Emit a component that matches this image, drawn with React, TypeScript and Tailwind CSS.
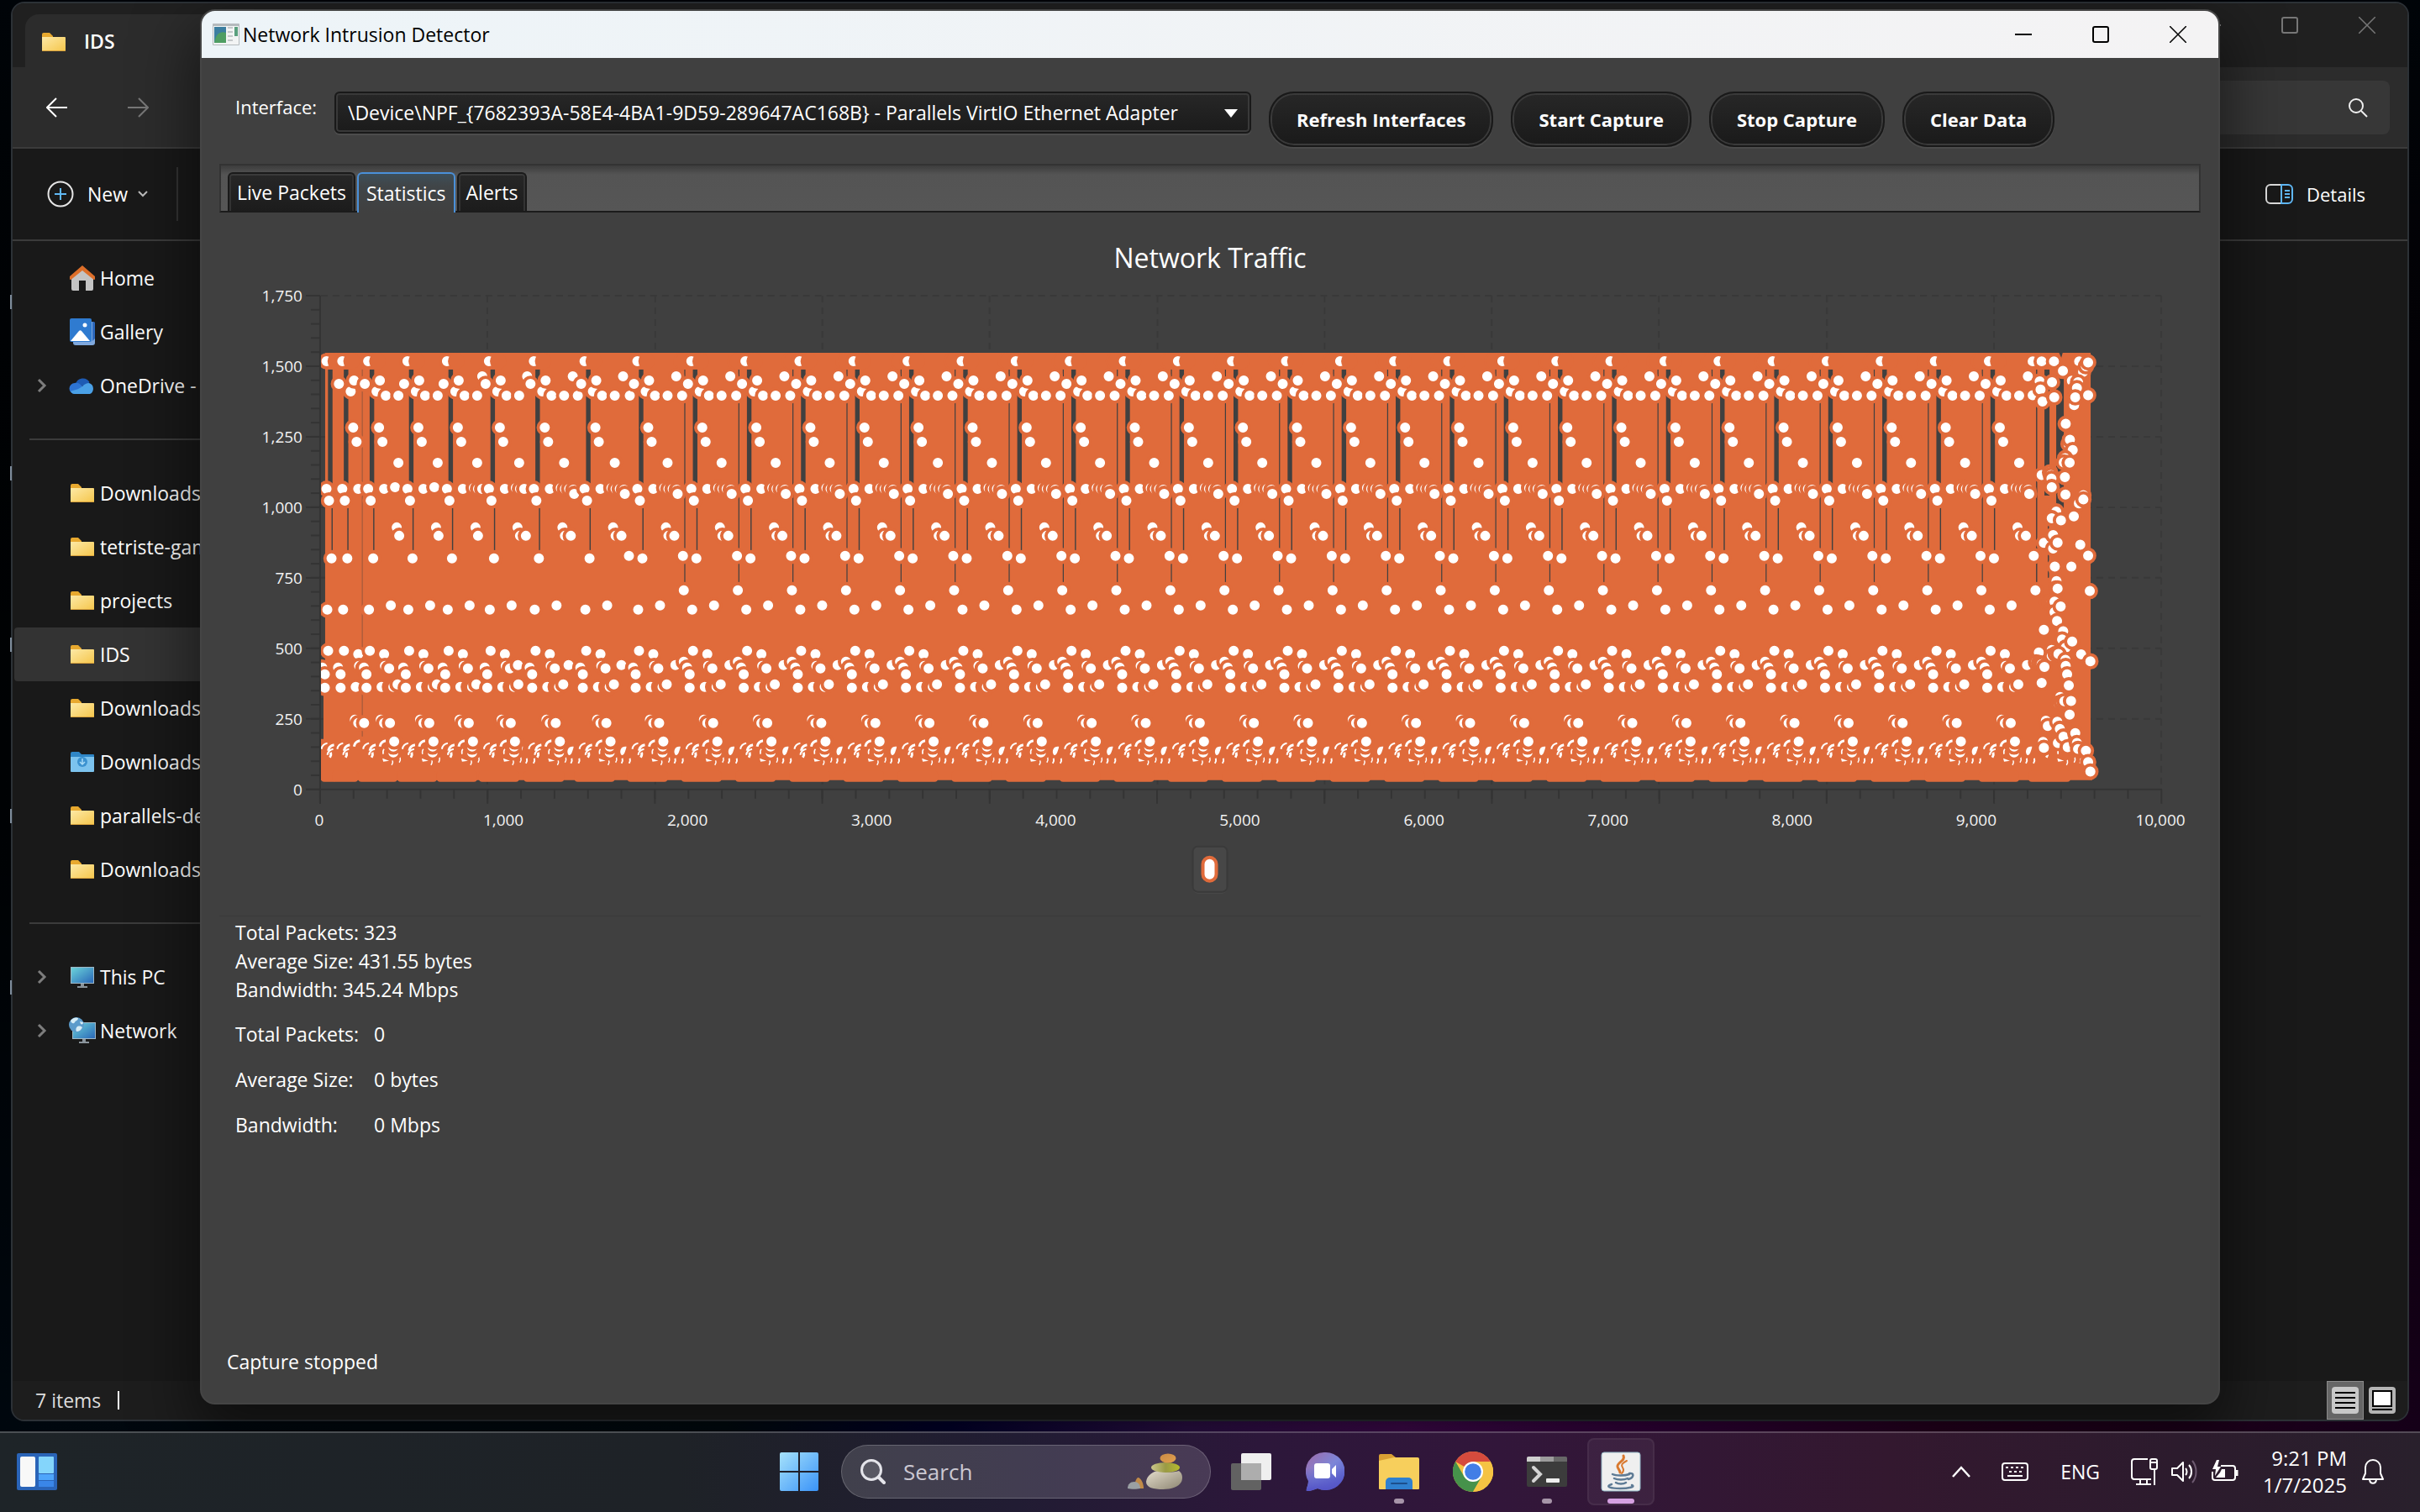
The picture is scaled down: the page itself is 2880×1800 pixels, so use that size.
import React from "react";

/* ---------- Chart data ---------- */

type Dot = [number, number];

const FIRST_ANCHORS = [394.6, 413.4, 444.2, 491, 538, 588, 641.5, 701.8, 764.7];
const PERIOD = 64.37;
const ANCHORS: number[] = [...FIRST_ANCHORS, ...Array.from({ length: 25 }, (_, i) => 829 + i * PERIOD)];
const TAIL_ANCHOR = 829 + 25 * PERIOD;

/* Samples of one burst, drawn in order: later markers lie over earlier ones. */
function burst(i: number): Dot[] {
  const dots: Dot[] = [];
  if (i >= 5) dots.push([i <= 6 ? -14 : i === 7 ? -20 : i === 8 ? -23 : -24, 448]);
  if (i >= 7) dots.push([i === 7 ? -14 : i === 8 ? -15 : -17, 471]);
  if (i >= 8) dots.push([-16, 662]);
  if (i >= 9) dots.push([-15, 703], [-18, 430]);
  if (i >= 6) dots.push([-25, 792]);
  if (i >= 9) dots.push([-15, 788]);
  dots.push([-11, 795]);
  if (i >= 1) dots.push([-10, 457]);
  dots.push([-8, 803], [-8, 819], [-6, 430], [-6, 582], [-5, 726], [-4, 775], [-3, 596], [0, 665]);
  if (i >= 1)
    dots.push([4, 466], [8, 453], [7, 509], [11, 526], [13, 582], [13, 779], [10, 818], [9, 857], [13, 861], [14, 793], [19, 796], [20, 861]);
  if (i >= 2) dots.push([15, 471], [30, 471], [30, 551], [21, 721], [20, 818], [22, 820], [24, 818], [29, 815], [26, 580], [28, 628], [31, 638]);
  if (i >= 5) dots.push([38, 638]);
  if (i >= 4) dots.push([26, 581], [31, 582], [36, 582]);
  if (i >= 6) dots.push([41, 583], [42, 588]);
  return dots;
}

const TAIL: Dot[] = [
  [660, 238], [692, 238], [736, 238], [768, 265], [806, 238], [811, 238], [818, 238], [826, 238],
  [800, 293], [830, 285], [840, 268], [822, 297], [850, 252], [858, 241], [812, 318], [818, 314], [805, 345], [808, 362], [812, 340], [858, 334],
  [660, 334], [685, 295], [688, 318], [695, 352], [729, 297], [737, 340],
  [778, 415], [788, 472], [793, 460], [803, 489], [776, 512], [771, 524], [792, 525], [775, 566],
  [692, 560], [722, 552], [725, 560], [727, 570], [728, 594], [777, 615], [825, 640], [841, 617], [841, 629],
  [744, 663], [722, 682], [728, 682], [761, 688], [807, 677],
  [700, 752], [733, 730], [733, 768], [749, 751], [830, 757], [858, 788],
  [739, 819], [798, 819], [745, 860], [743, 881], [749, 881], [864, 888],
  [712, 920], [720, 920], [728, 918], [738, 918], [738, 948], [760, 932], [747, 973], [700, 998],
  [769, 1002], [765, 1025], [778, 1048], [801, 1031],
  [682, 1062], [728, 1055], [728, 1072], [742, 1066], [752, 1066], [833, 1067], [866, 1087],
  [672, 1090], [683, 1092], [692, 1095], [702, 1103], [777, 1083], [778, 1100], [783, 1124], [692, 1148], [789, 1155],
  [758, 1188], [753, 1206], [763, 1203], [773, 1200], [797, 1199], [792, 1238],
  [707, 1255], [714, 1270], [748, 1258], [757, 1278], [750, 1318], [770, 1300], [812, 1290], [697, 1315], [700, 1332],
  [785, 1330], [818, 1318], [822, 1335], [850, 1340], [858, 1372], [866, 1399],
];

const ORANGE = "#e06b3b";
const PANEL = "#404040";

function Marker({ x, y }: { x: number; y: number }) {
  return <circle cx={x} cy={y} r="7.9" fill="#fff" stroke={ORANGE} strokeWidth="3.8" />;
}

function LowTraffic({ a, i }: { a: number; i: number }) {
  const arc = (dx: number, y: number) => `M${a + dx - 4} ${y + 6}q1 -6 7 -7`;
  const tick = (dx: number, y: number) => `M${a + dx} ${y - 3}q1 3 -1 6`;
  return (
    <g stroke="#fff" fill="none" strokeWidth="2">
      {i >= 6 && <path d={`M${a - 19} 889c-6 -1 -8 4 -7 8c1 4 4 2 5 -1c1 -3 2 -5 2 -7Z`} fill="#fff" stroke="none" />}
      <path d={arc(-8, 886)} />
      <path d={arc(0, 888) + tick(-1, 899)} strokeWidth="3" />
      <path d={arc(-1, 893)} />
      {i >= 1 && <path d={arc(12, 883)} strokeWidth="3" />}
      {i >= 2 && <path d={`M${a + 12} 898q-1 -4 1 -6` + tick(23, 908) + tick(32, 905)} strokeWidth="1.5" />}
      {i >= 2 && <path d={`M${a + 11} 903l8 3l-7 1Z`} fill="#fff" stroke="none" />}
      {i >= 5 && <path d={tick(39, 906) + tick(48, 906)} />}
    </g>
  );
}

function TrafficChart() {
  const yTicks = [1750, 1500, 1250, 1000, 750, 500, 250, 0];
  const step = 199.3;
  return (
    <svg viewBox="261 330 2359 760" className="block w-full" role="img" aria-label="Network Traffic line chart">
      <defs>
        <clipPath id="plot"><rect x="382" y="352" width="2200" height="588" /></clipPath>
      </defs>
      <g stroke="#393939" strokeWidth="2" strokeDasharray="8 6" fill="none">
        {yTicks.slice(0, 7).map((v, i) => <path key={v} d={`M382 ${352 + i * 84}H2573`} />)}
        {Array.from({ length: 11 }, (_, i) => <path key={i} d={`M${Math.round(381 + (i + 1) * step)} 352V940`} />)}
      </g>
      <g stroke="#343434" strokeWidth="2" fill="none">
        <path d="M381 352V957M364 940H2574" />
        {yTicks.map((v, i) => <path key={v} d={`M364 ${352 + i * 84}H381`} />)}
        {Array.from({ length: 35 }, (_, i) => <path key={i} d={`M370 ${352 + i * 16.8}H381`} />)}
        {Array.from({ length: 12 }, (_, i) => <path key={i} d={`M${381 + i * step} 940V957`} />)}
        {Array.from({ length: 55 }, (_, i) => <path key={i} d={`M${381 + i * step / 5} 940V951`} />)}
      </g>
      <g clipPath="url(#plot)">
        <path fill={ORANGE} d="M387 420H2489V888H2491V929H382V880H385V790H387Z" />
        {ANCHORS.map((a, i) => {
          const end = Math.min(a + 30, (ANCHORS[i + 1] ?? TAIL_ANCHOR) - 18);
          return <rect key={a} x={i === 0 ? 382 : a - 18} y="918" width={end - a + 18} height="13" rx="4" fill={ORANGE} />;
        })}
        <rect x="2415" y="918" width="50" height="13" rx="4" fill={ORANGE} />
        <g fill={PANEL}>
          {ANCHORS.map((a, i) => (
            <g key={a}>
              <rect x={a - 4.2} y="440" width="5.4" height="136" />
              <rect x={a} y="605" width="1.4" height="50" />
              {i >= 9 && <rect x={a - 14.4} y="440" width="1.2" height="253" />}
            </g>
          ))}
          <rect x="2424" y="440" width="1.4" height="253" />
          <rect x="2434" y="440" width="6" height="150" />
          <rect x="2438" y="618" width="1.4" height="70" />
          <rect x="2448" y="440" width="9" height="165" />
          <path d="M2451 419H2456L2454 426Z" />
          <rect x="430.5" y="440" width="1.5" height="437" opacity="0.3" />
        </g>
        {ANCHORS.map((a, i) => <LowTraffic key={a} a={a} i={i} />)}
        <LowTraffic a={TAIL_ANCHOR} i={9} />
        {ANCHORS.map((a, i) => (
          <g key={a}>
            {burst(i).map(([dx, y], k) => (
              <g key={k}>
                <Marker x={a + dx} y={y} />
                {dx === -6 && y === 430 && <circle cx={a + 5} cy={430} r="9.8" fill={ORANGE} />}
                {dx === -18 && y === 430 && <circle cx={a - 15} cy={430} r="9.8" fill={ORANGE} />}
              </g>
            ))}
            {i >= 2 && (
              <>
                <Marker x={a + 24} y={896} />
                <Marker x={a + 24} y={889} />
                <Marker x={a + 25} y={883} />
              </>
            )}
          </g>
        ))}
        <Marker x={TAIL_ANCHOR - 24} y={448} />
        <Marker x={TAIL_ANCHOR - 17} y={662} />
        <Marker x={TAIL_ANCHOR - 15} y={703} />
        <Marker x={TAIL_ANCHOR - 25} y={792} />
        {TAIL.map(([u, v], k) => <Marker key={k} x={2200 + u / 3} y={330 + v / 2.376} />)}
      </g>
      <g fill="#f2f2f2" fontSize="19" fontFamily='"Open Sans", sans-serif'>
        {yTicks.map((v, i) => (
          <text key={v} x="360" y={359 + i * 84} textAnchor="end">{v.toLocaleString("en-US")}</text>
        ))}
        {Array.from({ length: 11 }, (_, i) => (
          <text key={i} x={380 + i * 219.2} y="983" textAnchor="middle">{(i * 1000).toLocaleString("en-US")}</text>
        ))}
      </g>
      <rect x="1420" y="1010" width="41" height="54" rx="6" fill="#4a4a4a" />
      <rect x="1420" y="1008" width="41" height="54" rx="6" fill="#474747" stroke="#3a3a3a" strokeWidth="2" />
      <rect x="1432" y="1021" width="16" height="28" rx="8" fill="#fff" stroke={ORANGE} strokeWidth="4" />
    </svg>
  );
}

/* ---------- Icons ---------- */

function FolderIcon() {
  return (
    <svg viewBox="0 0 28 24" className="h-6 w-7">
      <path d="M0 3a2 2 0 0 1 2-2h7l4 4v5H0Z" fill="#e8a92f" />
      <path d="M0 6h27a1 1 0 0 1 1 1v15a1 1 0 0 1-1 1H1a1 1 0 0 1-1-1Z" fill="url(#folderFill)" />
      <path d="M0 22h28a1 1 0 0 1-1 1H1a1 1 0 0 1-1-1Z" fill="#d9a23c" />
    </svg>
  );
}

function SharedDefs() {
  return (
    <svg width="0" height="0" className="absolute" aria-hidden="true">
      <defs>
        <linearGradient id="folderFill" x1="0" y1="0" x2="1" y2="1"><stop offset="0" stopColor="#fde9a6" /><stop offset="1" stopColor="#f5c64b" /></linearGradient>
        <linearGradient id="screen" x1="0" y1="0" x2="1" y2="1"><stop offset="0" stopColor="#6bd3da" /><stop offset="1" stopColor="#2a68b8" /></linearGradient>
        <linearGradient id="win" x1="0" y1="0" x2="1" y2="1"><stop offset="0" stopColor="#a6e2fb" /><stop offset="1" stopColor="#3a93f8" /></linearGradient>
        <linearGradient id="chat" x1="0" y1="0" x2="1" y2="1"><stop offset="0" stopColor="#a06aa8" /><stop offset="0.5" stopColor="#7c86d8" /><stop offset="1" stopColor="#4a4fc8" /></linearGradient>
        <linearGradient id="chatLow" x1="0" y1="0" x2="0" y2="1"><stop offset="0.4" stopColor="#5558c8" stopOpacity="0" /><stop offset="1" stopColor="#5453c6" /></linearGradient>
        <linearGradient id="stone" x1="0" y1="0" x2="1" y2="1"><stop offset="0" stopColor="#e3dccb" /><stop offset="1" stopColor="#8d8672" /></linearGradient>
        <linearGradient id="stoneTop" x1="0" y1="0" x2="1" y2="1"><stop offset="0" stopColor="#c98a45" /><stop offset="1" stopColor="#e2a04e" /></linearGradient>
        <linearGradient id="stoneMid" x1="0" y1="0" x2="1" y2="0"><stop offset="0" stopColor="#cbc78c" /><stop offset="0.5" stopColor="#9a9a45" /><stop offset="1" stopColor="#b6bc2c" /></linearGradient>
      </defs>
    </svg>
  );
}

function HomeIcon() {
  return (
    <svg viewBox="0 0 32 32" className="h-8 w-8">
      <path d="M3 14 16 4l13 10v15a2 2 0 0 1-2 2h-7V19h-8v12H5a2 2 0 0 1-2-2Z" fill="#c4c4c4" />
      <path d="M16 1 1 14v3c0 1 1 1.500 2 .6L16 7l13 10.600c1 .9 2 .4 2-.6v-3Z" fill="#dd6f2a" />
    </svg>
  );
}

function GalleryIcon() {
  return (
    <svg viewBox="0 0 32 34" className="h-[34px] w-8">
      <rect x="5" y="5" width="26" height="28" rx="3" fill="#7fa8dd" />
      <path d="M28 5h1a2 2 0 0 1 2 2v18l-3 3Z" fill="#2c68bd" />
      <rect x="1" y="1" width="26" height="28" rx="2" fill="#2f7bd0" />
      <path d="M2 28 12 16c1-1 2-1 3 0l10 12Z" fill="#fff" />
      <circle cx="19" cy="9" r="2.500" fill="#fff" />
    </svg>
  );
}

function CloudIcon() {
  return (
    <svg viewBox="0 0 32 22" className="h-[22px] w-8">
      <path d="M8 9a9 9 0 0 1 16.500-2L20 12Z" fill="#1e5bb4" />
      <path d="M7 21a6.500 6.500 0 0 1 0-13c3-.6 5 .3 7 2l10 7-6 4Z" fill="#2d74d4" />
      <path d="M24 8a7 7 0 0 1 1 13H7c-2 0-4-1-5-3 5-2 9-2 14-6 3-3 5-4 8-4Z" fill="#4aa0e6" />
    </svg>
  );
}

function DownloadsIcon() {
  return (
    <svg viewBox="0 0 28 24" className="h-6 w-7">
      <path d="M0 2a2 2 0 0 1 2-2h8l3 3h14a1 1 0 0 1 1 1v6H0Z" fill="#2f86c6" />
      <path d="M0 6h28v17a1 1 0 0 1-1 1H1a1 1 0 0 1-1-1Z" fill="#7cc3ee" />
      <circle cx="14" cy="12" r="6" fill="#3b92d0" />
      <path d="M14 8v7m-3-3 3 3 3-3" stroke="#a9dcf7" strokeWidth="1.500" fill="none" />
    </svg>
  );
}

function MonitorShape() {
  return (
    <>
      <rect x="2" y="2" width="28" height="20" fill="#9fb8c6" />
      <rect x="3" y="3" width="26" height="18" fill="url(#screen)" />
      <path d="M14 22h4v3h4v2H10v-2h4Z" fill="#8a949b" />
    </>
  );
}

function PcIcon() {
  return <svg viewBox="0 0 32 28" className="h-7 w-8"><MonitorShape /></svg>;
}

function NetworkIcon() {
  return (
    <svg viewBox="0 0 32 32" className="h-8 w-8">
      <g transform="translate(2 4)"><MonitorShape /></g>
      <circle cx="9" cy="9" r="9" fill="#5b9bcb" />
      <path d="M2 4c3-4 7-4 9-3 0 3-3 3-4 5s-4 2-5-2Zm8 7c3-1 5 0 6 1-1 3-4 5-7 5-1-2-1-4 1-6Zm3-6 4 1c0 2-1 3-3 2Z" fill="#d5ecf6" />
    </svg>
  );
}

function AppIcon() {
  return (
    <svg viewBox="0 0 32 26" className="h-[26px] w-8">
      <rect width="32" height="26" rx="1" fill="#b4babd" />
      <rect x="1" y="3" width="30" height="22" fill="#f2f4f4" />
      <rect x="2" y="4" width="14" height="19" fill="#3b7ea0" />
      <path d="M2 23c2-12 8-14 14-12v12Z" fill="#4f9e63" />
      <path d="M18 5h6M18 10h6M18 15h6M18 20h6" stroke="#c4c8ca" strokeWidth="2" />
      <rect x="26" y="4" width="4" height="11" fill="#5aa07e" />
    </svg>
  );
}

function CaptionButtons({ color }: { color: string }) {
  return (
    <div className="flex items-center pr-[2px]" style={{ color }}>
      <button aria-label="Minimize" className="flex h-14 w-[92px] items-center justify-center">
        <svg viewBox="0 0 20 20" className="h-5 w-5"><path d="M0 10h20" stroke="currentColor" strokeWidth="2" /></svg>
      </button>
      <button aria-label="Maximize" className="flex h-14 w-[92px] items-center justify-center">
        <svg viewBox="0 0 20 20" className="h-5 w-5"><rect x="1" y="1" width="18" height="18" rx="2" fill="none" stroke="currentColor" strokeWidth="2" /></svg>
      </button>
      <button aria-label="Close" className="flex h-14 w-[92px] items-center justify-center">
        <svg viewBox="0 0 20 20" className="h-5 w-5"><path d="M0 0l20 20M20 0L0 20" stroke="currentColor" strokeWidth="1.500" /></svg>
      </button>
    </div>
  );
}

/* ---------- File explorer ---------- */

type NavItem = { label: string; icon: React.ReactNode; expandable?: boolean; selected?: boolean };

const NAV: (NavItem | null)[] = [
  { label: "Home", icon: <HomeIcon /> },
  { label: "Gallery", icon: <GalleryIcon /> },
  { label: "OneDrive -", icon: <CloudIcon />, expandable: true },
  null,
  { label: "Downloads", icon: <FolderIcon /> },
  { label: "tetriste-game", icon: <FolderIcon /> },
  { label: "projects", icon: <FolderIcon /> },
  { label: "IDS", icon: <FolderIcon />, selected: true },
  { label: "Downloads", icon: <FolderIcon /> },
  { label: "Downloads", icon: <DownloadsIcon /> },
  { label: "parallels-demo", icon: <FolderIcon /> },
  { label: "Downloads", icon: <FolderIcon /> },
  null,
  { label: "This PC", icon: <PcIcon />, expandable: true },
  { label: "Network", icon: <NetworkIcon />, expandable: true },
];

function ExplorerWindow() {
  return (
    <section className="absolute top-[2px] right-[13px] bottom-3 left-[13px] flex flex-col overflow-hidden rounded-2xl border-2 border-[#2c3136] bg-[#191919] text-white">
      <header className="flex h-[76px] shrink-0 justify-between bg-[#202020]">
        <div className="mt-[13px] ml-[15px] flex w-[400px] items-center gap-[22px] rounded-t-2xl bg-[#2c2c2c] pt-[2px] pl-5">
          <FolderIcon />
          <span className="text-[23px] font-semibold">IDS</span>
        </div>
        <div className="-mt-[2px]"><CaptionButtons color="#777777" /></div>
      </header>
      <div className="flex h-[95px] shrink-0 items-center justify-between bg-[#2c2c2c] pr-[21px] pl-10">
        <div className="flex gap-[70px]">
          <button aria-label="Back">
            <svg viewBox="0 0 26 24" className="h-6 w-[26px]" fill="none" stroke="#fff" strokeWidth="2"><path d="M25 12H1M12 1 1 12l11 11" /></svg>
          </button>
          <button aria-label="Forward">
            <svg viewBox="0 0 26 24" className="h-6 w-[26px]" fill="none" stroke="#777" strokeWidth="2"><path d="M1 12h24M14 1l11 11-11 11" /></svg>
          </button>
        </div>
        <button aria-label="Search IDS" className="flex h-16 w-[420px] items-center justify-end rounded-lg bg-[#373737] pr-[26px]">
          <svg viewBox="0 0 24 24" className="h-6 w-6" fill="none" stroke="#eee" strokeWidth="2"><circle cx="10" cy="10" r="8" /><path d="m16 16 7 7" /></svg>
        </button>
      </div>
      <div className="flex h-[112px] shrink-0 items-center justify-between border-y-2 border-[#3b3b3b] pr-[50px] pl-[41px]">
        <div className="flex items-center">
          <button className="flex items-center">
            <svg viewBox="0 0 32 32" className="h-8 w-8" fill="none" strokeWidth="2"><circle cx="16" cy="16" r="14.500" stroke="#e6e6e6" /><path d="M16 9v14M9 16h14" stroke="#60b8f5" /></svg>
            <span className="ml-4 text-[23px]">New</span>
            <svg viewBox="0 0 12 8" className="ml-3 h-2 w-3" fill="none" stroke="#bbb" strokeWidth="2"><path d="m1 1 5 5 5-5" /></svg>
          </button>
          <div className="ml-[34px] h-16 w-[2px] bg-[#333333]" />
        </div>
        <button className="flex items-center gap-4">
          <svg viewBox="0 0 33 24" className="h-6 w-[33px]" fill="none" strokeWidth="2">
            <path d="M19 1H6a5 5 0 0 0-5 5v12a5 5 0 0 0 5 5h13" stroke="#ddd" />
            <path d="M19 1h8a5 5 0 0 1 5 5v12a5 5 0 0 1-5 5h-8ZM23 8h6M23 12h6M23 16h6" stroke="#60b8f5" />
          </svg>
          <span className="text-[22px]">Details</span>
        </button>
      </div>
      <nav className="flex w-[380px] flex-1 flex-col overflow-hidden pt-3">
        {NAV.map((item, i) =>
          item === null ? (
            <div key={i} className="flex h-16 shrink-0 items-center pl-5"><div className="h-[2px] w-full bg-[#3b3b3b]" /></div>
          ) : (
            <a
              key={i}
              href="#"
              className={"ml-[2px] flex h-16 shrink-0 items-center rounded " + (item.selected ? "bg-[#333333]" : "")}
            >
              <span className="flex w-[65px] justify-center">
                {item.expandable && (
                  <svg viewBox="0 0 12 18" className="h-[18px] w-3" fill="none" stroke="#7d7d7d" strokeWidth="3"><path d="m2 2 7 7-7 7" /></svg>
                )}
              </span>
              <span className="flex w-8 justify-center">{item.icon}</span>
              <span className="ml-[5px] text-[23px] whitespace-nowrap">{item.label}</span>
            </a>
          ),
        )}
      </nav>
      <footer className="flex h-[46px] shrink-0 items-center justify-between bg-[#1d1d1d] pr-[14px] pl-[27px]">
        <div className="flex items-center gap-5 text-[23px] text-[#dddddd]">
          <span>7 items</span>
          <div className="h-[22px] w-[2px] bg-white" />
        </div>
        <div className="flex items-center gap-[6px]">
          <button aria-label="Details view" className="flex h-[46px] w-11 items-center justify-center border border-[#8a8a8a] bg-[#666666]">
            <svg viewBox="0 0 32 32" className="h-8 w-8"><rect width="32" height="32" rx="4" fill="#c8c8c8" /><path d="M4 7h24M4 13h24M4 19h24M4 25h24" stroke="#000" strokeWidth="2" /></svg>
          </button>
          <button aria-label="Large icons view">
            <svg viewBox="0 0 32 32" className="h-8 w-8"><rect width="32" height="32" rx="4" fill="#b4b4b4" /><rect x="5" y="5" width="22" height="18" fill="#fff" stroke="#000" strokeWidth="2" /><path d="M4 27h24" stroke="#000" strokeWidth="2" /></svg>
          </button>
        </div>
      </footer>
    </section>
  );
}

/* ---------- Detector application ---------- */

function ActionButton({ children }: { children: React.ReactNode }) {
  return (
    <button className="h-[66px] rounded-[30px] border-2 border-[#191919] bg-linear-to-b from-[#272727] to-[#1a1a1a] px-[31px] text-[22px] font-bold whitespace-nowrap text-white shadow-[inset_0_0_0_2px_#3a3a3a,0_2px_1px_#4c4c4c]">
      {children}
    </button>
  );
}

function Tab({ children, active }: { children: React.ReactNode; active?: boolean }) {
  const look = active
    ? "z-10 h-12 border-[#4a90d9] bg-linear-to-b from-[#3d4f5a] via-[#404548] via-30% to-[#404040]"
    : "h-[46px] border-[#1a1a1a] bg-linear-to-b from-[#272727] to-[#1c1c1c] shadow-[inset_0_2px_0_#3a3a3a,inset_2px_0_0_#333333,inset_-2px_0_0_#333333]";
  return (
    <button role="tab" aria-selected={!!active} className={"rounded-t-md border-2 border-b-0 px-[9px] text-[23px] leading-[44px] whitespace-nowrap text-white " + look}>
      {children}
    </button>
  );
}

function DetectorWindow() {
  return (
    <section className="absolute top-[13px] right-[240px] bottom-[34px] left-[240px] flex flex-col overflow-hidden rounded-2xl bg-[#404040] text-[23px] text-white shadow-[0_0_0_2px_#454545,0_30px_70px_10px_rgba(0,0,0,0.5)]">
      <header className="flex h-14 shrink-0 items-center justify-between bg-linear-to-r from-[#edf4f8] to-[#f4f3f4] pl-[13px] text-black">
        <div className="flex items-center gap-1">
          <AppIcon />
          <h1>Network Intrusion Detector</h1>
        </div>
        <CaptionButtons color="#000000" />
      </header>
      <div className="flex items-start pt-10 pl-10">
        <label htmlFor="interface" className="w-[118px] text-[22px] leading-9">Interface:</label>
        <div className="relative mr-[21px] w-[1091px]">
          <select id="interface" className="h-[50px] w-full appearance-none rounded-md border-2 border-[#191919] bg-linear-to-b from-[#272727] to-[#1b1b1b] pr-16 pl-[14px] text-[23px] text-white shadow-[inset_0_0_0_2px_#393939,0_2px_0_#4c4c4c]">
            <option>{"\\Device\\NPF_{7682393A-58E4-4BA1-9D59-289647AC168B} - Parallels VirtIO Ethernet Adapter"}</option>
          </select>
          <svg viewBox="0 0 16 10" className="pointer-events-none absolute top-[21px] right-4 h-[10px] w-4"><path d="M0 0h16L8 10Z" fill="#fff" /></svg>
        </div>
        <div className="flex gap-[21px]">
          <ActionButton>Refresh Interfaces</ActionButton>
          <ActionButton>Start Capture</ActionButton>
          <ActionButton>Stop Capture</ActionButton>
          <ActionButton>Clear Data</ActionButton>
        </div>
      </div>
      <div role="tablist" className="mx-[21px] mt-5 flex h-[58px] shrink-0 items-start gap-[2px] border-2 border-[#333333] border-b-[#1b1b1b] bg-linear-to-b from-[#3c3c3c] via-[#545454] via-20% to-[#565656] pt-2 pl-2">
        <Tab>Live Packets</Tab>
        <Tab active>Statistics</Tab>
        <Tab>Alerts</Tab>
      </div>
      <div className="mx-[21px]" role="tabpanel">
        <h2 className="pt-[30px] text-center text-[32px] leading-[47px]">Network Traffic</h2>
        <TrafficChart />
        <div className="border-t border-[#3a3a3a] pt-[2px] pl-[19px]">
          <p className="leading-[34px]">Total Packets: 323</p>
          <p className="leading-[34px]">Average Size: 431.55 bytes</p>
          <p className="leading-[34px]">Bandwidth: 345.24 Mbps</p>
          <dl className="mt-[9px] grid grid-cols-[165px_1fr] leading-[54px]">
            <dt>Total Packets:</dt><dd>0</dd>
            <dt>Average Size:</dt><dd>0 bytes</dd>
            <dt>Bandwidth:</dt><dd>0 Mbps</dd>
          </dl>
        </div>
      </div>
      <p className="mt-auto pb-8 pl-[30px] leading-[34px]">Capture stopped</p>
    </section>
  );
}

/* ---------- Taskbar ---------- */

function TaskButton({ label, running, active, children }: { label: string; running?: boolean; active?: boolean; children: React.ReactNode }) {
  return (
    <button
      aria-label={label}
      className={"relative mx-1 flex h-20 w-20 items-center justify-center rounded-lg " + (active ? "border-2 border-white/5 bg-white/5" : "")}
    >
      {children}
      {running && <span className="absolute bottom-[2px] h-[6px] w-3 rounded-full bg-[#a795a9]" />}
      {active && <span className="absolute bottom-0 h-[6px] w-8 rounded-full bg-[#d6a0e2]" />}
    </button>
  );
}

function Stones() {
  return (
    <svg viewBox="0 0 66 44" className="h-11 w-[66px]">
      <path d="M8 42c0-8 3-14 5-13 4 2 6 8 6 13Z" fill="#c08a48" />
      <path d="M0 42c0-5 3-8 8-8 4 0 7 3 7 8-4 1-11 1-15 0Z" fill="#9aa0a3" />
      <path d="M22 34c1-8 8-12 14-13 8 2 18 2 25 0 4 3 5 8 3 13-3 6-12 9-22 9-11 0-20-2-20-9Z" fill="url(#stone)" />
      <ellipse cx="45" cy="17" rx="17" ry="6" fill="url(#stoneMid)" />
      <ellipse cx="48" cy="6" rx="9.500" ry="5.500" fill="url(#stoneTop)" />
    </svg>
  );
}

function Taskbar() {
  return (
    <footer className="relative flex h-24 shrink-0 items-center justify-between border-t-2 border-white/20 bg-[linear-gradient(90deg,#1e2428_0%,#1e2227_28%,#211c33_42%,#2c173a_52%,#32163a_62%,#33182f_78%,#2c1b2d_90%,#29202c_100%)] pb-[2px]">
      <button aria-label="Widgets" className="ml-5">
        <svg viewBox="0 0 48 44" className="h-11 w-12">
          <rect width="48" height="44" rx="2" fill="#2a64b8" />
          <rect x="4" y="4" width="18" height="36" rx="2" fill="#f8f8f8" />
          <rect x="26" y="4" width="18" height="20" rx="1" fill="#84d5fb" />
          <rect x="26" y="25" width="18" height="7" fill="#4ea5fb" />
          <rect x="26" y="33" width="18" height="7" fill="#3a86e8" />
        </svg>
      </button>
      <div className="absolute inset-x-0 top-0 mx-auto flex h-full w-fit items-center pb-[2px]">
        <TaskButton label="Start">
          <svg viewBox="0 0 46 46" className="h-[46px] w-[46px]">
            <path fill="url(#win)" d="M2 0h20v22H0V2a2 2 0 0 1 2-2ZM24 0h20a2 2 0 0 1 2 2v20H24ZM0 24h22v22H2a2 2 0 0 1-2-2ZM24 24h22v20a2 2 0 0 1-2 2H24Z" />
          </svg>
        </TaskButton>
        <label className="mr-1 ml-[6px] flex h-16 w-[440px] items-center rounded-full border border-white/20 bg-white/15 pr-8 pl-[22px]">
          <svg viewBox="0 0 30 30" className="h-[30px] w-[30px]" fill="none" stroke="#e4e4ea" strokeLinecap="round"><circle cx="13" cy="13" r="11.500" strokeWidth="3" fill="#ffffff20" /><path d="m22 22 6 6" strokeWidth="4" /></svg>
          <input aria-label="Search" placeholder="Search" className="ml-[21px] w-0 flex-1 bg-transparent text-[26px] text-white placeholder:text-[#cbc8d2]" />
          <Stones />
        </label>
        <TaskButton label="Task View">
          <svg viewBox="0 0 48 44" className="h-11 w-12">
            <rect x="12" width="36" height="32" rx="2" fill="#efefef" />
            <rect y="12" width="36" height="32" rx="2" fill="#626262" />
            <rect x="12" y="12" width="24" height="20" fill="#adadad" />
          </svg>
        </TaskButton>
        <TaskButton label="Chat">
          <svg viewBox="0 0 46 46" className="h-[46px] w-[46px]">
            <path d="M23 0a23 22.500 0 1 1-9 43c-4 1-8 3-12 3-2 0-1-2-1-3 1-3 2-6 2-9A22.500 22.500 0 0 1 23 0Z" fill="url(#chat)" />
            <path d="M23 0a23 22.500 0 1 1-9 43c-4 1-8 3-12 3-2 0-1-2-1-3 1-3 2-6 2-9A22.500 22.500 0 0 1 23 0Z" fill="url(#chatLow)" />
            <rect x="10" y="13" width="19" height="18" rx="3" fill="#fff" />
            <path d="m31 20 5-5v15l-5-5Z" fill="#fff" />
          </svg>
        </TaskButton>
        <TaskButton label="File Explorer" running>
          <svg viewBox="0 0 48 44" className="h-11 w-12">
            <path d="M0 3a2 2 0 0 1 2-2h13l5 4v8H0Z" fill="#d9a033" />
            <path d="M0 9 18 5h28a2 2 0 0 1 2 2v35a1 1 0 0 1-1 1H1a1 1 0 0 1-1-1Z" fill="#f7cf5c" />
            <path d="M8 43V34a5 5 0 0 1 5-5h22a5 5 0 0 1 5 5v9Z" fill="#2f80cf" />
            <path d="M15 36h18" stroke="#1c4f8c" strokeWidth="2" strokeLinecap="round" />
          </svg>
        </TaskButton>
        <TaskButton label="Chrome">
          <svg viewBox="0 0 48 48" className="h-12 w-12">
            <circle cx="24" cy="24" r="24" fill="#f5c343" />
            <path d="M24 24 3.200 12A24 24 0 0 1 44.800 12Z" fill="#d64b3d" />
            <path d="M3.200 12A24 24 0 0 0 24 48L34.400 30 24 24 13.600 30Z" fill="#46924b" />
            <path d="M24 12h20.800A24 24 0 0 1 24 48l10.400-18Z" fill="#f5c343" />
            <circle cx="24" cy="24" r="12" fill="#fff" />
            <circle cx="24" cy="24" r="9.800" fill="#427ee6" />
          </svg>
        </TaskButton>
        <TaskButton label="Terminal" running>
          <svg viewBox="0 0 48 36" className="h-9 w-12">
            <rect width="48" height="36" rx="2" fill="#3c3c3c" />
            <path d="M2 0h14v6H0V2a2 2 0 0 1 2-2Z" fill="#cfcfcf" /><path d="M16 0h16v6H16Z" fill="#9c9c9c" /><path d="M32 0h14a2 2 0 0 1 2 2v4H32Z" fill="#686868" />
            <path d="m8 13 8 8-8 8" fill="none" stroke="#d4d4d4" strokeWidth="4" strokeLinecap="round" />
            <rect x="23" y="26" width="16" height="5" rx="1" fill="#eee" />
          </svg>
        </TaskButton>
        <TaskButton label="Java" active>
          <svg viewBox="0 0 48 48" className="h-12 w-12">
            <rect x="1" y="1" width="46" height="46" rx="3" fill="#efefef" stroke="#8fb4c4" />
            <g fill="none" strokeLinecap="round">
              <path d="M27 5c3 6-8 8-7 13 0 2 3 4 3 7" stroke="#d9792f" strokeWidth="3" />
              <path d="M31 11c-6 3-7 5-5 8 2 3 1 5-1 7" stroke="#d9792f" strokeWidth="2" />
              <path d="M14 27c4 2 15 2 20 0M16 32c4 2 12 2 16 0M18 37c3 2 9 2 12 0M34 26c6-1 6 5-1 7" stroke="#5e7b95" strokeWidth="2.500" />
              <path d="M13 39c-9 3 0 5 10 5s19-2 14-4" stroke="#5e7b95" strokeWidth="2.500" />
            </g>
          </svg>
        </TaskButton>
      </div>
      <div className="flex items-center pr-[43px] text-[22px] text-white">
        <button aria-label="Show hidden icons" className="mr-[37px]">
          <svg viewBox="0 0 22 14" className="h-[14px] w-[22px]" fill="none" stroke="#fff" strokeWidth="2.500"><path d="m1 13 10-11 10 11" /></svg>
        </button>
        <button aria-label="Touch keyboard" className="mr-[38px]">
          <svg viewBox="0 0 32 24" className="h-6 w-8" fill="none" stroke="#fff" strokeWidth="2">
            <rect x="1" y="2" width="30" height="20" rx="3" />
            <path d="M5 7h3M11 7h3M17 7h3M23 7h3M9 12h3M15 12h3M21 12h3M7 17h18" />
          </svg>
        </button>
        <button className="mr-[37px] text-[23px]">ENG</button>
        <button aria-label="Network, volume and battery" className="mr-[29px] flex items-center gap-4">
          <svg viewBox="0 0 32 32" className="h-8 w-8" fill="none" stroke="#fff" strokeWidth="2">
            <path d="M20 1H4a3 3 0 0 0-3 3v18a3 3 0 0 0 3 3h20M11 25v6M19 25v6M6 31h18" />
            <rect x="23" y="1" width="8" height="12" rx="2" /><path d="M23 5h8M28 13v19" />
          </svg>
          <svg viewBox="0 0 32 28" className="h-7 w-8" fill="none" stroke="#fff" strokeWidth="2">
            <path d="M1 10v8h6l7 7V3l-7 7Z" strokeLinejoin="round" /><path d="M17 10c2 2 2 6 0 8M21 6c4 4 4 12 0 16" /><path d="M25 1c6 7 6 19 0 26" stroke="#6d5a70" />
          </svg>
          <svg viewBox="0 0 32 28" className="h-7 w-8" fill="none" stroke="#fff" strokeWidth="2">
            <path d="M11 7h14a3 3 0 0 1 3 3v11a3 3 0 0 1-3 3H4a3 3 0 0 1-3-3v-7" />
            <path d="M12 11h4v10H5l5-6Z" fill="#fff" stroke="none" /><path d="M6 0 1 11h4l-1 8 7-11H7l2-8Z" fill="#fff" stroke="none" /><path d="M30 12v7" strokeWidth="3" />
          </svg>
        </button>
        <button className="mr-[18px] text-right text-[24px] leading-8">
          <span className="block">9:21 PM</span>
          <span className="block">1/7/2025</span>
        </button>
        <button aria-label="Notifications">
          <svg viewBox="0 0 26 30" className="h-[30px] w-[26px]" fill="none" stroke="#fff" strokeWidth="2" strokeLinejoin="round"><path d="M13 1c-5 0-9 4-9 9v7l-3 7h24l-3-7v-7c0-5-4-9-9-9ZM9 25c1 5 7 5 8 0" /></svg>
        </button>
      </div>
    </footer>
  );
}

export default function App() {
  return (
    <main className="flex h-screen flex-col overflow-hidden bg-black font-['Open_Sans',sans-serif]">
      <SharedDefs />
      <div className="relative flex-1 bg-[linear-gradient(90deg,#00070e_0%,#010b10_30%,#00002c_39%,#2c1048_49%,#40094e_58%,#300038_70%,#26001f_80%,#150018_100%)]">
        <div className="absolute inset-0 bg-linear-to-b from-[#000408] via-black/70 via-60% to-transparent" />
        <ExplorerWindow />
        <div aria-hidden="true" className="absolute top-[351px] left-[12px] flex flex-col gap-[187px]">
          {[0, 1, 2, 3, 4].map((n) => <div key={n} className="h-[17px] w-[2px] bg-[#7f8d9c]" />)}
        </div>
        <DetectorWindow />
      </div>
      <Taskbar />
    </main>
  );
}
